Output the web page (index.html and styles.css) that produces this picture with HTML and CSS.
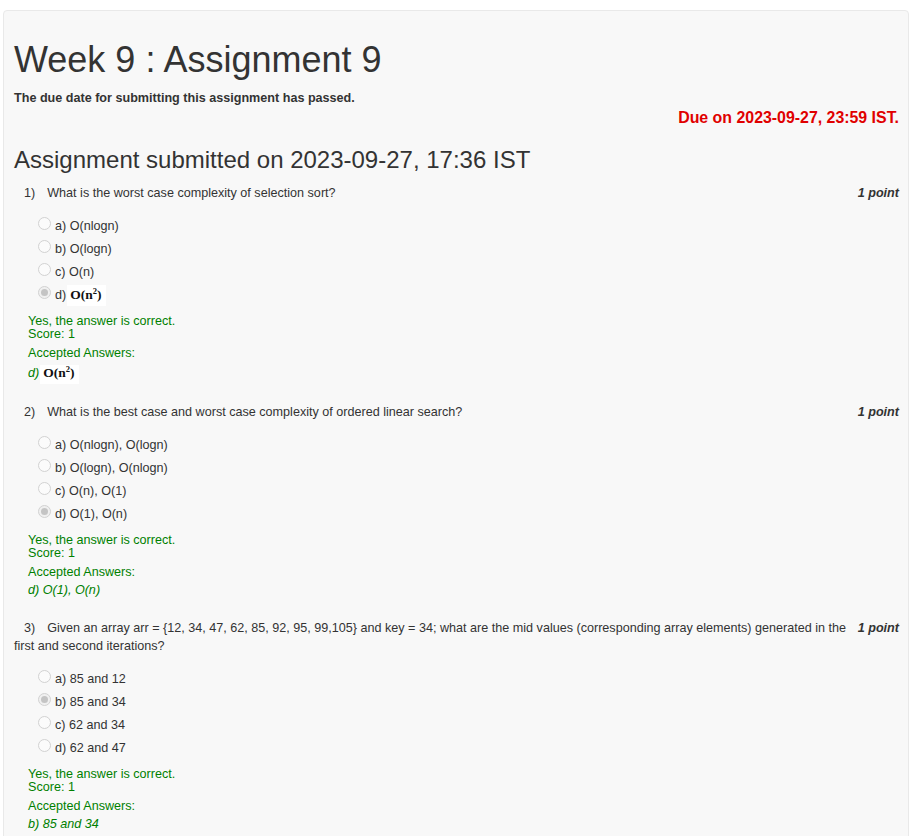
FILE: index.html
```html
<!DOCTYPE html>
<html lang="en">
<head>
<meta charset="utf-8">
<title>Week 9 : Assignment 9</title>
<link rel="stylesheet" href="styles.css">
</head>
<body>
<div class="panel">
  <h1 class="title">Week 9 : Assignment 9</h1>
  <div class="due-passed">The due date for submitting this assignment has passed.</div>
  <div class="due-on">Due on 2023-09-27, 23:59 IST.</div>
  <h2 class="submitted">Assignment submitted on 2023-09-27, 17:36 IST</h2>

  <div class="q q-first">
    <div class="q-head"><span class="pts">1 point</span><span class="qn">1)</span>What is the worst case complexity of selection sort?</div>
    <div class="opts">
      <div class="opt"><span class="radio"></span>a) O(nlogn)</div>
      <div class="opt"><span class="radio"></span>b) O(logn)</div>
      <div class="opt"><span class="radio"></span>c) O(n)</div>
      <div class="opt"><span class="radio checked"></span>d)<span class="math math-opt">O(n<sup>2</sup>)</span></div>
    </div>
    <div class="fb">
      <div class="fb-line">Yes, the answer is correct.</div>
      <div class="fb-line">Score: 1</div>
      <div class="fb-line fb-acc">Accepted Answers:</div>
      <div class="fb-line fb-ans fb-ans-math"><i>d)</i><span class="math math-ans">O(n<sup>2</sup>)</span></div>
    </div>
  </div>

  <div class="q">
    <div class="q-head"><span class="pts">1 point</span><span class="qn">2)</span>What is the best case and worst case complexity of ordered linear search?</div>
    <div class="opts">
      <div class="opt"><span class="radio"></span>a) O(nlogn), O(logn)</div>
      <div class="opt"><span class="radio"></span>b) O(logn), O(nlogn)</div>
      <div class="opt"><span class="radio"></span>c) O(n), O(1)</div>
      <div class="opt"><span class="radio checked"></span>d) O(1), O(n)</div>
    </div>
    <div class="fb">
      <div class="fb-line">Yes, the answer is correct.</div>
      <div class="fb-line">Score: 1</div>
      <div class="fb-line fb-acc">Accepted Answers:</div>
      <div class="fb-line fb-ans"><i>d) O(1), O(n)</i></div>
    </div>
  </div>

  <div class="q q-next">
    <div class="q-head"><span class="pts">1 point</span><span class="qn">3)</span>Given an array arr = {12, 34, 47, 62, 85, 92, 95, 99,105} and key = 34; what are the mid values (corresponding array elements) generated in the first and second iterations?</div>
    <div class="opts">
      <div class="opt"><span class="radio"></span>a) 85 and 12</div>
      <div class="opt"><span class="radio checked"></span>b) 85 and 34</div>
      <div class="opt"><span class="radio"></span>c) 62 and 34</div>
      <div class="opt"><span class="radio"></span>d) 62 and 47</div>
    </div>
    <div class="fb">
      <div class="fb-line">Yes, the answer is correct.</div>
      <div class="fb-line">Score: 1</div>
      <div class="fb-line fb-acc">Accepted Answers:</div>
      <div class="fb-line fb-ans"><i>b) 85 and 34</i></div>
    </div>
  </div>
</div>
</body>
</html>
```
FILE: styles.css
```css
html, body {
  margin: 0;
  padding: 0;
  background: #ffffff;
}

body {
  font-family: "Liberation Sans", Arial, sans-serif;
  font-size: 12.6px;
  line-height: 18px;
  color: #333333;
}

.panel {
  margin: 10px 4px 0 3px;
  padding: 0 9px 40px 10px;
  background: #f8f8f8;
  border: 1px solid #e9e9e9;
  border-radius: 4px;
}

.title {
  margin: 29px 0 0;
  font-size: 36px;
  line-height: 40px;
  font-weight: normal;
  color: #333333;
}

.due-passed {
  margin-top: 9px;
  font-weight: bold;
}

.due-on {
  margin-top: 1.5px;
  text-align: right;
  font-size: 15.9px;
  font-weight: bold;
  color: #e00000;
}

.submitted {
  margin: 20px 0 0;
  font-size: 24px;
  line-height: 26.4px;
  font-weight: normal;
  color: #333333;
}

.q {
  margin-top: 23px;
}

.q-first {
  margin-top: 11px;
}

.q-next {
  margin-top: 22px;
}

.pts {
  float: right;
  margin-left: 10px;
  font-weight: bold;
  font-style: italic;
}

.qn {
  display: inline-block;
  margin-left: 10px;
  margin-right: 12px;
}

.opts {
  margin-top: 15px;
  padding-left: 24px;
}

.opt {
  margin-bottom: 5px;
}

.radio {
  display: inline-block;
  box-sizing: border-box;
  width: 13px;
  height: 13px;
  margin-right: 4px;
  border: 1px solid #d2d2d2;
  border-radius: 50%;
  background: #fbfbfb;
  vertical-align: baseline;
  position: relative;
}

.radio.checked {
  background: #f0f0f0;
}

.radio.checked::after {
  content: "";
  position: absolute;
  left: 2px;
  top: 2px;
  width: 7px;
  height: 7px;
  border-radius: 50%;
  background: #c4c4c4;
}

.math {
  display: inline-block;
  background: #ffffff;
  font-family: "Liberation Serif", "Times New Roman", serif;
  font-weight: bold;
  font-size: 13.5px;
  color: #111111;
  padding-left: 3px;
  padding-right: 5px;
}

.math sup {
  font-size: 8.5px;
  line-height: 0;
  vertical-align: 5px;
}

.math-opt {
  line-height: 14px;
  padding-top: 3px;
  padding-bottom: 4px;
  margin: -3px 0 -4px 1px;
}

.math-ans {
  line-height: 13px;
  padding-top: 1px;
  padding-bottom: 5px;
  margin: -1px 0 -5px 1px;
}

.fb {
  margin-top: 11.5px;
  padding-left: 14px;
  color: #008000;
}

.fb-line {
  line-height: 13px;
}

.fb-acc {
  margin-top: 6px;
}

.fb-ans {
  margin-top: 4.5px;
}

.fb-ans-math {
  margin-top: 5.5px;
}
```
